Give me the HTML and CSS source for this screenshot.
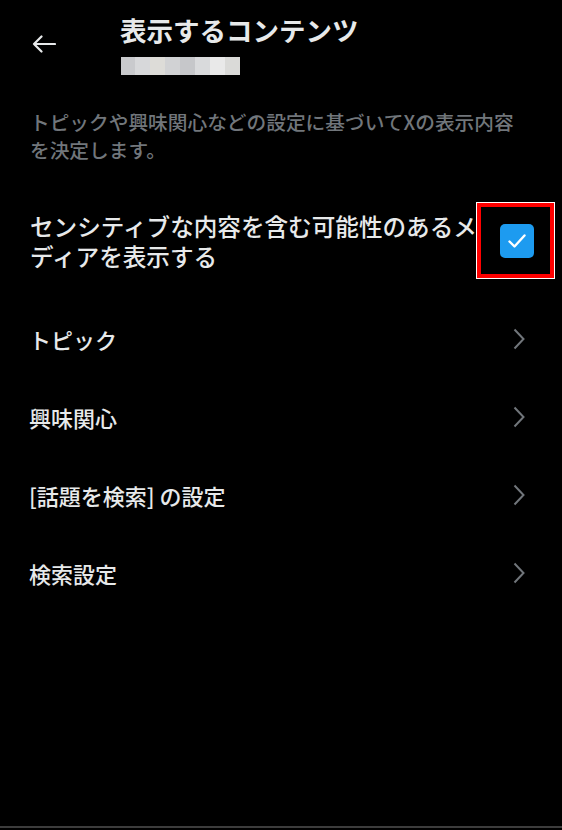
FILE: index.html
```html
<!DOCTYPE html>
<html lang="ja">
<head>
<meta charset="utf-8">
<link rel="stylesheet" href="styles.css">
</head>
<body>
<div class="screen">
  <header class="header">
    <button class="back" aria-label="戻る">
      <svg width="24" height="18" viewBox="0 0 24 18"><path d="M23 9H2M9.5 1.5L2 9l7.5 7.5" fill="none" stroke="#e7e9ea" stroke-width="2.2" stroke-linecap="round" stroke-linejoin="round"/></svg>
    </button>
    <div class="titles">
      <h1 class="title">表示するコンテンツ</h1>
      <div class="handle">
        <span class="px p1"></span><span class="px p2"></span><span class="px p3"></span><span class="px p4"></span><span class="px p5"></span><span class="px p6"></span><span class="px p7"></span><span class="px p8"></span>
      </div>
    </div>
  </header>

  <p class="desc">トピックや興味関心などの設定に基づいてXの表示内容を決定します。</p>

  <div class="toggle-row">
    <div class="toggle-text">センシティブな内容を含む可能性のあるメディアを表示する</div>
    <div class="check-wrap">
      <div class="checkbox">
        <svg width="24" height="24" viewBox="0 0 24 24"><path d="M4.5 12.5l5 5 10-11" fill="none" stroke="#fff" stroke-width="2.4" stroke-linecap="round" stroke-linejoin="round"/></svg>
      </div>
      <div class="highlight"></div>
    </div>
  </div>

  <ul class="menu">
    <li class="item"><span>トピック</span><svg class="chev" width="14" height="22" viewBox="0 0 14 22"><path d="M2.5 1.5l9 9.5-9 9.5" fill="none" stroke="#71767b" stroke-width="2"/></svg></li>
    <li class="item"><span>興味関心</span><svg class="chev" width="14" height="22" viewBox="0 0 14 22"><path d="M2.5 1.5l9 9.5-9 9.5" fill="none" stroke="#71767b" stroke-width="2"/></svg></li>
    <li class="item"><span>[話題を検索] の設定</span><svg class="chev" width="14" height="22" viewBox="0 0 14 22"><path d="M2.5 1.5l9 9.5-9 9.5" fill="none" stroke="#71767b" stroke-width="2"/></svg></li>
    <li class="item"><span>検索設定</span><svg class="chev" width="14" height="22" viewBox="0 0 14 22"><path d="M2.5 1.5l9 9.5-9 9.5" fill="none" stroke="#71767b" stroke-width="2"/></svg></li>
  </ul>

  <div class="spacer"></div>
  <div class="bottom-line"></div>
</div>
</body>
</html>
```

FILE: styles.css
```css
* { box-sizing: border-box; }
html, body {
  margin: 0;
  padding: 0;
  background: #000;
}
body {
  font-family: "Noto Sans CJK JP", "Noto Sans", sans-serif;
  color: #e7e9ea;
}
.screen {
  width: 562px;
  height: 830px;
  display: flex;
  flex-direction: column;
  overflow: hidden;
}
.header {
  display: flex;
  align-items: flex-start;
  padding: 12px 0 0 32px;
  height: 92px;
}
.back {
  background: none;
  border: 0;
  padding: 0;
  margin-top: 23px;
  width: 24px;
  height: 18px;
  display: flex;
}
.titles {
  margin-left: 64px;
  display: flex;
  flex-direction: column;
}
.title {
  margin: 0;
  font-size: 26.5px;
  font-weight: 700;
  line-height: 36px;
  color: #e7e9ea;
}
.handle {
  display: flex;
  margin-top: 9px;
  margin-left: 1px;
  height: 18px;
}
.px { width: 15px; height: 18px; display: block; }
.p1 { background: #c9cacd; width: 14px; }
.p2 { background: #d7d8da; }
.p3 { background: #dddcd8; }
.p4 { background: #d1d2d4; }
.p5 { background: #c6c7ca; }
.p6 { background: #d9dadc; }
.p7 { background: #e9e9e9; }
.p8 { background: #dadad8; }
.desc {
  margin: 16px 0 0;
  padding: 0 32px 0 30px;
  font-size: 19.7px;
  line-height: 28px;
  color: #71767b;
  font-weight: 500;
}
.toggle-row {
  display: flex;
  align-items: center;
  padding: 0 28px 0 30px;
  margin-top: 37px;
  height: 80px;
}
.toggle-text {
  width: 452px;
  flex: none;
  font-size: 23.6px;
  line-height: 30px;
  font-weight: 500;
}
.check-wrap {
  position: relative;
  width: 34px;
  height: 34px;
  flex: none;
  margin-left: auto;
}
.checkbox {
  width: 34px;
  height: 34px;
  border-radius: 5px;
  background: #1d9bf0;
  display: flex;
  align-items: center;
  justify-content: center;
}
.highlight {
  position: absolute;
  left: -23px;
  top: -21px;
  width: 77px;
  height: 75px;
  border: 4px solid #ff0000;
  box-shadow: 0 0 0 1px #fff;
}
.menu {
  list-style: none;
  margin: 19px 0 0;
  padding: 0;
}
.item {
  display: flex;
  align-items: center;
  justify-content: space-between;
  height: 78px;
  padding: 0 36px 0 29px;
  font-size: 22px;
  font-weight: 500;
  color: #e7e9ea;
}
.chev { display: block; }
.spacer { flex: 1; }
.bottom-line {
  height: 2px;
  background: #3c3c3c;
  margin-bottom: 2px;
}
```
